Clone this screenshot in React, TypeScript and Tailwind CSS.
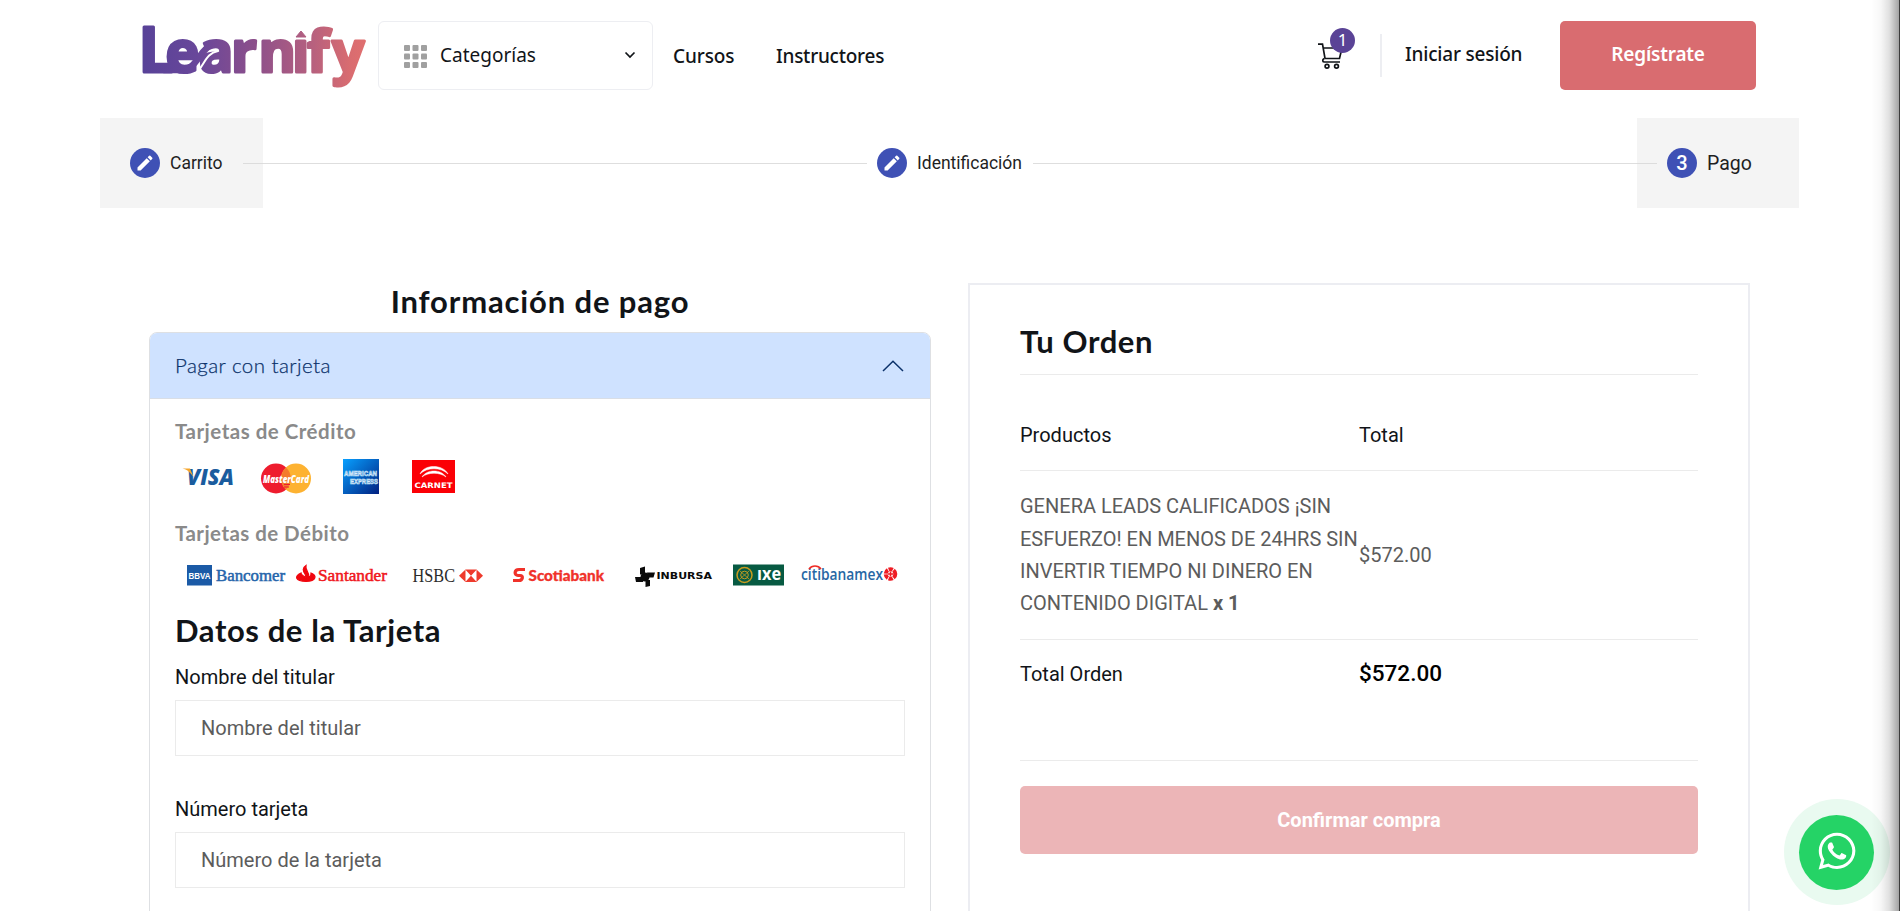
import type { ReactNode } from "react";
import { MdEdit } from "react-icons/md";
import { FaWhatsapp } from "react-icons/fa";

const nav = "font-['Noto_Sans',sans-serif] text-[#111418] whitespace-nowrap";
const head = "font-[Lato,sans-serif] text-[#111418] whitespace-nowrap";

type MarkProps = { x: number; w: number; y: number; h: number; gap: number; label: string; children: ReactNode };

function Mark({ x, w, y, h, gap, label, children }: MarkProps) {
  return (
    <svg
      role="img"
      aria-label={label}
      width={w}
      height={h}
      viewBox={`${x} ${y} ${w} ${h}`}
      className="shrink-0 overflow-visible"
      style={{ marginLeft: gap }}
    >
      {children}
    </svg>
  );
}

function Logo() {
  return (
    <svg role="img" aria-label="Learnify" width="224" height="62" viewBox="143 25 224 62" className="shrink-0 overflow-visible">
      <defs>
        <linearGradient id="brand" gradientUnits="userSpaceOnUse" x1="143" y1="0" x2="366" y2="0">
          <stop offset="0" stopColor="#584298" />
          <stop offset="0.25" stopColor="#69479a" />
          <stop offset="0.5" stopColor="#8c4f8b" />
          <stop offset="0.75" stopColor="#b5607f" />
          <stop offset="0.93" stopColor="#d96c70" />
          <stop offset="1" stopColor="#e06f6f" />
        </linearGradient>
      </defs>
      <text
        x="138.500 165.500 199 231 258.500 292 307 332"
        y="72"
        fontSize="57"
        fill="url(#brand)"
        stroke="url(#brand)"
        strokeWidth="3"
        strokeLinejoin="round"
        fontFamily="'Open Sans', sans-serif"
        fontWeight="700"
      >
        <tspan fontSize="62">L</tspan>earnıfy
      </text>
      <path d="M296 37 L301 31 L306 37 Z" fill="url(#brand)" stroke="url(#brand)" strokeLinejoin="round" />
      <path d="M199 70 C206 60 208 53 218 51" fill="none" stroke="#fff" strokeWidth="2" strokeLinecap="round" />
      <path d="M164 70 H182 C197 69 199 50 212 44.500" fill="none" stroke="url(#brand)" strokeWidth="6.500" strokeLinecap="round" />
    </svg>
  );
}

function Header() {
  return (
    <header className="flex h-[118px] items-start pl-[143px] pt-[21px]">
      <div className="pt-[4px]">
        <Logo />
      </div>
      <div className="ml-[11px] flex h-[69px] w-[275px] items-center rounded-md border border-[#edeef2] pl-[25px] pr-[16px]">
        <svg width="24" height="24" viewBox="0 0 24 24" fill="#a0a0a0" className="mt-[2px]">
          {[0, 8.5, 17].map((y) =>
            [0, 8.5, 17].map((x) => <rect key={`${x}-${y}`} x={x} y={y} width="6" height="6" rx="1" />),
          )}
        </svg>
        <span className={`${nav} ml-3 pb-[2px] text-[19px] leading-6`}>Categorías</span>
        <svg width="12" height="8" viewBox="0 0 12 8" className="ml-auto mb-px" fill="none" stroke="#111418" strokeWidth="1.700">
          <path d="M1.500 1.500 L6 6 L10.500 1.500" />
        </svg>
      </div>
      <nav className="flex h-[69px] items-center pt-px">
        <a className={`${nav} ml-[20px] w-[103px] text-[19px] font-medium tracking-[-0.1px]`}>Cursos</a>
        <a className={`${nav} text-[19px] font-medium tracking-[-0.25px]`}>Instructores</a>
      </nav>
      <div className="ml-auto flex h-[69px] w-[242px] items-center">
        <div className="relative h-[26px] w-[25px]">
          <svg width="25" height="26" viewBox="0 0 25 26" fill="none" stroke="#111418" strokeWidth="1.700">
            <path d="M0 1.200 H4.500 L7 15.500 H21.500 L24 5 H5.200" />
            <path d="M6 15.500 C4 17 4.500 19 6.500 19 H22" />
            <circle cx="9" cy="23.200" r="1.900" />
            <circle cx="18.500" cy="23.200" r="1.900" />
          </svg>
          <span className="absolute -top-[15px] left-[12px] flex size-[25px] items-center justify-center rounded-full bg-[#5a4396] pb-px font-['Noto_Sans',sans-serif] text-[17px] text-white">
            1
          </span>
        </div>
        <div className="ml-[37px] h-[43px] w-[2px] bg-[#edeef2]" />
        <a className={`${nav} ml-[23px] pb-[2px] text-[19px] font-medium tracking-[-0.2px]`}>Iniciar sesión</a>
      </div>
      <button className="mr-[144px] flex h-[69px] w-[196px] items-center justify-center rounded-[5px] bg-[#d96c70] pb-[2px] font-['Noto_Sans',sans-serif] text-[19px] font-semibold tracking-[-0.2px] text-white">
        Regístrate
      </button>
    </header>
  );
}

function Dot({ children }: { children: ReactNode }) {
  return (
    <span className="flex size-[30px] shrink-0 items-center justify-center rounded-full bg-[#3f51b5] font-[Roboto,sans-serif] text-[20px] font-medium text-white">
      {children}
    </span>
  );
}

function Stepper() {
  const line = "mt-px h-px flex-1 bg-[#dedede]";
  return (
    <div className="mx-[100px] flex h-[90px] w-[1699px] items-center font-[Roboto,sans-serif] text-[#1f1f1f]">
      <div className="flex h-full w-[163px] items-center bg-[#f4f4f4] pl-[30px]">
        <Dot><MdEdit size={20} /></Dot>
        <span className="ml-[10px] w-[73px] shrink-0 text-[17.5px]">Carrito</span>
        <span className="mt-px h-px w-[20px] shrink-0 bg-[#dcdcdc]" />
      </div>
      <span className={line} />
      <span className="w-[10px]" />
      <Dot><MdEdit size={20} /></Dot>
      <span className="ml-[10px] w-[116px] text-[17.5px]">Identificación</span>
      <span className={line} />
      <div className="flex h-full w-[162px] items-center bg-[#f4f4f4]">
        <span className="mt-px mr-[10px] h-px w-[20px] bg-[#dcdcdc]" />
        <Dot>3</Dot>
        <span className="ml-[10px] pt-px text-[19.5px]">Pago</span>
      </div>
    </div>
  );
}

function CreditMarks() {
  return (
    <div className="flex h-[36px] items-start">
      <Mark label="Visa" x={182} w={54} y={459} h={36} gap={7}>
        <text x="187" y="484.500" fontFamily="'Open Sans', sans-serif" fontWeight="800" fontStyle="italic" fontSize="22" textLength="47" lengthAdjust="spacingAndGlyphs" fill="#1a5c9e">VISA</text>
        <path d="M182.500 468.500 H190 L193.500 477 C190 472 187 469.500 182.500 468.500Z" fill="#f5a52a" />
      </Mark>
      <Mark label="MasterCard" x={260} w={52} y={459} h={36} gap={24}>
        <circle cx="276" cy="478.500" r="15" fill="#ee1c2e" />
        <circle cx="296" cy="478.500" r="15" fill="#fdb231" />
        <path d="M286 467.500 A15 15 0 0 1 286 489.500 A15 15 0 0 1 286 467.500Z" fill="#f47b2c" />
        <path d="M284 484.500h6M284 487h5" stroke="#ee1c2e" />
        <text x="263" y="482.500" fontFamily="'Open Sans', sans-serif" fontWeight="800" fontStyle="italic" fontSize="10.500" textLength="46" lengthAdjust="spacingAndGlyphs" fill="#fff">MasterCard</text>
      </Mark>
      <Mark label="American Express" x={342} w={38} y={459} h={36} gap={30}>
        <defs>
          <linearGradient id="amex" x1="0" y1="0" x2="1" y2="1">
            <stop offset="0" stopColor="#08a0ff" />
            <stop offset="1" stopColor="#012080" />
          </linearGradient>
        </defs>
        <rect x="343" y="459" width="36" height="35" fill="url(#amex)" />
        <g fontFamily="'Liberation Sans', sans-serif" fontWeight="700" fontSize="7.500" fill="#4a9cdc" stroke="#d9ecfa" strokeWidth="0.600">
          <text x="344" y="475.500" textLength="33" lengthAdjust="spacingAndGlyphs">AMERICAN</text>
          <text x="350" y="483.500" textLength="28" lengthAdjust="spacingAndGlyphs">EXPRESS</text>
        </g>
      </Mark>
      <Mark label="Carnet" x={411} w={45} y={459} h={36} gap={31}>
        <rect x="412" y="460" width="43" height="33" fill="#fb0006" />
        <path d="M420 474 C424 464 443 464 448 474 C441 467 427 467 420 474Z M422 477 C427 469 441 469 446 477 C440 472 428 472 422 477Z" fill="#fff" stroke="#fff" strokeWidth="0.500" />
        <text x="414.500" y="487.500" fontFamily="'DejaVu Sans', sans-serif" fontWeight="700" fontSize="7.500" textLength="38" lengthAdjust="spacingAndGlyphs" fill="#fff">CARNET</text>
      </Mark>
    </div>
  );
}

function DebitMarks() {
  const g = { lengthAdjust: "spacingAndGlyphs" as const };
  return (
    <div className="flex h-[26px] items-start">
      <Mark label="BBVA Bancomer" x={187} w={99} y={562} h={26} gap={12}>
        <rect x="187" y="565" width="25" height="20.500" fill="#1b5aa6" />
        <text x="188.500" y="579" fontFamily="'Liberation Sans', sans-serif" fontWeight="700" fontSize="9.500" textLength="22" {...g} fill="#fff">BBVA</text>
        <text x="216" y="580.500" fontFamily="'Liberation Serif', serif" fontSize="16" stroke="#2565ab" strokeWidth="0.500" textLength="69" {...g} fill="#2565ab">Bancomer</text>
      </Mark>
      <Mark label="Santander" x={296} w={92} y={562} h={26} gap={10}>
        <path d="M301 573 C294 576 295 581 306 581.500 C317 581 317 575 311 573 C311 576 310 577 309 577 C309 572 305 570 306 565.500 C302 568 303 571 305 574 C306 576 306 577 306 577.500 C303 576 301 575 301 573Z" fill="#f0060e" stroke="#f0060e" strokeWidth="1.200" />
        <text x="318" y="580.500" fontFamily="'Liberation Serif', serif" fontSize="16" stroke="#f0161c" strokeWidth="0.500" textLength="69" {...g} fill="#f0161c">Santander</text>
      </Mark>
      <Mark label="HSBC" x={412} w={72} y={562} h={26} gap={24}>
        <text x="412.500" y="581.500" fontFamily="'Liberation Serif', serif" fontSize="18" textLength="42.500" {...g} fill="#2b2b2b">HSBC</text>
        <path d="M459 575.700 L465.500 569.500 H476.500 L483 575.700 L476.500 582 H465.500Z" fill="#ee3a2c" />
        <path d="M465.500 569.800 V581.700 L471 575.700Z M476.500 569.800 V581.700 L471 575.700Z" fill="#fff" />
      </Mark>
      <Mark label="Scotiabank" x={512} w={93} y={562} h={26} gap={28}>
        <path d="M525 569.500 H519 C514 569.500 514 575.500 518 575.500 H520 C524 575.500 522.500 580.500 519 580.500 H513" fill="none" stroke="#f0322a" strokeWidth="3.200" />
        <text x="528.500" y="580.500" fontFamily="Lato, sans-serif" fontWeight="900" fontSize="14.500" textLength="75.500" {...g} fill="#f0322a" stroke="#f0322a" strokeWidth="0.300">Scotiabank</text>
      </Mark>
      <Mark label="Inbursa" x={634} w={79} y={562} h={26} gap={29}>
        <g fill="#0b0b0b">
          <circle cx="645" cy="577" r="4.500" />
          <path d="M640 574.500 V568 L645 566.500 V574.500Z M647 572.500 H655 L653.500 577.500 H648Z M645.500 580 H650 V586 L645.500 587Z M643 582 H636 L635 577 H643Z" />
          <text x="656.500" y="578.500" fontFamily="'DejaVu Sans', sans-serif" fontWeight="700" fontSize="9" textLength="55.500" {...g}>INBURSA</text>
        </g>
      </Mark>
      <Mark label="IXE" x={733} w={52} y={562} h={26} gap={20}>
        <rect x="733" y="564.500" width="51" height="21" fill="#075a42" />
        <g fill="none" stroke="#c79a20">
          <circle cx="744.500" cy="575" r="7.500" strokeWidth="1.500" />
          <circle cx="744.500" cy="575" r="3.800" strokeWidth="1" />
          <path d="M740 571l9 8M749 571l-9 8" strokeWidth="0.800" />
        </g>
        <text x="757" y="579.500" fontFamily="'Open Sans', sans-serif" fontWeight="700" fontSize="17" textLength="24" {...g} fill="#fff">ıxe</text>
      </Mark>
      <Mark label="Citibanamex" x={801} w={98} y={562} h={26} gap={16}>
        <text x="801" y="579.500" fontFamily="'Open Sans', sans-serif" fontWeight="600" fontSize="15.500" textLength="82" {...g} fill="#2767a4">citibanamex</text>
        <path d="M809 569 C812 565 818 565 821 569" fill="none" stroke="#ef2b25" strokeWidth="1.500" />
        <circle cx="890.500" cy="574" r="4.800" fill="none" stroke="#ee1c24" strokeWidth="4" strokeDasharray="4.200 0.850" />
        <path d="M888 574h5M890.500 571.500v5" stroke="#ee1c24" strokeWidth="1.500" />
      </Mark>
    </div>
  );
}

function Field({ label, placeholder }: { label: string; placeholder: string }) {
  return (
    <label className="block h-[132px] font-[Roboto,sans-serif] text-[20px]">
      <span className="block h-[34px] leading-[22px] text-[#111418]">{label}</span>
      <input
        placeholder={placeholder}
        className="block h-[56px] w-full border border-[#ebebeb] px-[25px] pb-px placeholder:text-[#5c5c5c] outline-none"
      />
    </label>
  );
}

function PaymentPanel() {
  const sub = "font-[Lato,sans-serif] font-bold text-[20.5px] leading-[26px] text-[#8a8a8a] whitespace-nowrap";
  return (
    <section className="w-[782px]">
      <h2 className={`${head} h-[49px] text-center text-[31px] leading-[36px] font-bold tracking-[0.850px]`}>Información de pago</h2>
      <div className="h-[640px] overflow-hidden rounded-t-[8px] border border-[#dee0e3]">
        <div className="flex h-[66px] items-center justify-between border-b border-[#d9dee6] bg-[#cfe2ff] pl-[25px] pr-[26px]">
          <span className="pb-px font-[Lato,sans-serif] text-[20.5px] font-light tracking-[0.450px] text-[#0c326b] [-webkit-text-stroke:0.25px_#0c326b]">
            Pagar con tarjeta
          </span>
          <svg width="22" height="12" viewBox="0 0 22 12" fill="none" stroke="#0c326b" strokeWidth="1.500">
            <path d="M1 11 L11 1.200 L21 11" />
          </svg>
        </div>
        <div className="px-[25px] pt-[19px]">
          <h3 className={`${sub} h-[41px] tracking-[0.500px]`}>Tarjetas de Crédito</h3>
          <CreditMarks />
          <h3 className={`${sub} mt-[25px] h-[42px] tracking-[0.450px]`}>Tarjetas de Débito</h3>
          <DebitMarks />
          <h2 className={`${head} mt-[24px] h-[54px] text-[31px] leading-[36px] font-bold tracking-[0.600px]`}>Datos de la Tarjeta</h2>
          <Field label="Nombre del titular" placeholder="Nombre del titular" />
          <Field label="Número tarjeta" placeholder="Número de la tarjeta" />
        </div>
      </div>
    </section>
  );
}

function OrderPanel() {
  const row = "grid grid-cols-2 border-b border-[#ebebeb]";
  return (
    <section className="ml-[37px] h-[700px] w-[782px] border-2 border-[#ecedf2] px-[50px] font-[Roboto,sans-serif] text-[20px]">
      <h2 className={`${head} h-[90px] border-b border-[#ebebeb] pt-[38px] text-[31px] leading-[36px] font-bold tracking-[0.600px]`}>Tu Orden</h2>
      <div className={`${row} h-[96px] pt-[44px] leading-[32px] text-[#111418]`}>
        <span>Productos</span>
        <span>Total</span>
      </div>
      <div className={`${row} h-[169px] items-center leading-[32.4px] text-[#5c5c5c]`}>
        <p className="w-[339px]">
          GENERA LEADS CALIFICADOS ¡SIN<br />ESFUERZO! EN MENOS DE 24HRS SIN<br />INVERTIR TIEMPO NI DINERO EN<br />CONTENIDO DIGITAL <b>x 1</b>
        </p>
        <span>$572.00</span>
      </div>
      <div className={`${row} h-[121px] pt-[18px] leading-[32px] text-[#111418]`}>
        <span>Total Orden</span>
        <span className="text-[22.5px] leading-[30px] font-medium text-black">$572.00</span>
      </div>
      <button className="mt-[25px] h-[68px] w-full rounded-[5px] bg-[#ecb5b7] text-[20px] font-bold text-white">Confirmar compra</button>
    </section>
  );
}

export default function App() {
  return (
    <div className="relative h-[911px] w-[1900px] overflow-hidden bg-white">
      <Header />
      <Stepper />
      <main className="flex pl-[149px] pt-[75px]">
        <PaymentPanel />
        <OrderPanel />
      </main>
      <div className="absolute left-[1784px] top-[799px] flex size-[106px] items-center justify-center rounded-full bg-[#e9faf0] pr-px">
        <div className="flex size-[75px] items-center justify-center rounded-full bg-[#25d366] pb-[3px] text-white">
          <FaWhatsapp size={42} />
        </div>
      </div>
      <div className="absolute right-px top-0 h-full w-[28px] bg-[linear-gradient(to_right,transparent,rgba(0,0,0,0.03)_35%,rgba(0,0,0,0.12)_65%,rgba(0,0,0,0.36))]" />
      <div className="absolute right-0 top-0 h-full w-px bg-[#3c3c3c]" />
    </div>
  );
}
